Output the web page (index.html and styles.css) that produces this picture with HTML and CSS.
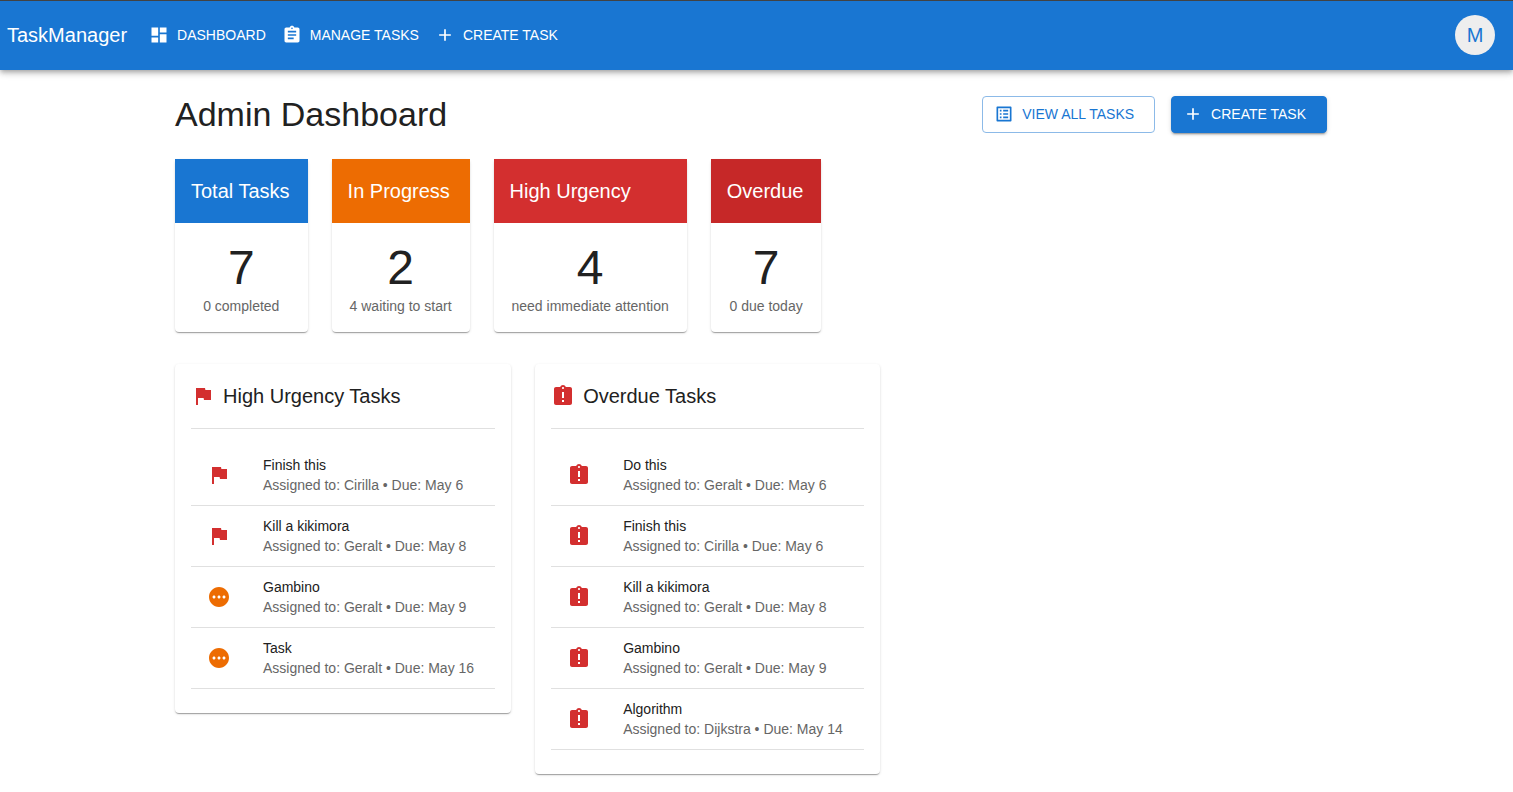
FILE: index.html
```html
<!DOCTYPE html>
<html lang="en">
<head>
<meta charset="utf-8">
<meta name="viewport" content="width=device-width, initial-scale=1">
<title>TaskManager</title>
<link rel="stylesheet" href="styles.css">
</head>
<body>
<svg class="sprite" aria-hidden="true">
  <symbol id="dashboard" viewBox="0 0 24 24"><path d="M3 13h8V3H3v10zm0 8h8v-6H3v6zm10 0h8V11h-8v10zm0-18v6h8V3h-8z"/></symbol>
  <symbol id="assignment" viewBox="0 0 24 24"><path d="M19 3h-4.18C14.4 1.84 13.3 1 12 1c-1.3 0-2.4.84-2.82 2H5c-1.1 0-2 .9-2 2v14c0 1.1.9 2 2 2h14c1.1 0 2-.9 2-2V5c0-1.1-.9-2-2-2zm-7 0c.55 0 1 .45 1 1s-.45 1-1 1-1-.45-1-1 .45-1 1-1zm2 14H7v-2h7v2zm3-4H7v-2h10v2zm0-4H7V7h10v2z"/></symbol>
  <symbol id="add" viewBox="0 0 24 24"><path d="M19 13h-6v6h-2v-6H5v-2h6V5h2v6h6v2z"/></symbol>
  <symbol id="list" viewBox="0 0 24 24"><path d="M19 5v14H5V5h14m1.1-2H3.9c-.5 0-.9.4-.9.9v16.2c0 .4.4.9.9.9h16.2c.4 0 .9-.5.9-.9V3.9c0-.5-.5-.9-.9-.9zM11 7h6v2h-6V7zm0 4h6v2h-6v-2zm0 4h6v2h-6zM7 7h2v2H7zm0 4h2v2H7zm0 4h2v2H7z"/></symbol>
  <symbol id="flag" viewBox="0 0 24 24"><path d="M14.4 6L14 4H5v17h2v-7h5.6l.4 2h7V6z"/></symbol>
  <symbol id="late" viewBox="0 0 24 24"><path d="M19 3h-4.18C14.4 1.84 13.3 1 12 1c-1.3 0-2.4.84-2.82 2H5c-1.1 0-2 .9-2 2v14c0 1.1.9 2 2 2h14c1.1 0 2-.9 2-2V5c0-1.1-.9-2-2-2zm-6 15h-2v-2h2v2zm0-4h-2V8h2v6zm-1-9c-.55 0-1-.45-1-1s.45-1 1-1 1 .45 1 1-.45 1-1 1z"/></symbol>
  <symbol id="pending" viewBox="0 0 24 24"><path d="M12 2C6.48 2 2 6.48 2 12s4.48 10 10 10 10-4.48 10-10S17.52 2 12 2zM7 13.5c-.83 0-1.5-.67-1.5-1.5s.67-1.5 1.5-1.5 1.5.67 1.5 1.5-.67 1.5-1.5 1.5zm5 0c-.83 0-1.5-.67-1.5-1.5s.67-1.5 1.5-1.5 1.5.67 1.5 1.5-.67 1.5-1.5 1.5zm5 0c-.83 0-1.5-.67-1.5-1.5s.67-1.5 1.5-1.5 1.5.67 1.5 1.5-.67 1.5-1.5 1.5z"/></symbol>
</svg>

<header class="appbar">
  <a class="brand" href="#">TaskManager</a>
  <nav class="nav">
    <a class="nav-link" href="#"><svg class="icon-small"><use href="#dashboard"/></svg>DASHBOARD</a>
    <a class="nav-link" href="#"><svg class="icon-small"><use href="#assignment"/></svg>MANAGE TASKS</a>
    <a class="nav-link" href="#"><svg class="icon-small"><use href="#add"/></svg>CREATE TASK</a>
  </nav>
  <button class="avatar" type="button">M</button>
</header>

<main class="page">
  <div class="container">
    <div class="page-head">
      <h1 class="page-title">Admin Dashboard</h1>
      <div class="actions">
        <button class="button button-outlined" type="button"><svg class="icon-small"><use href="#list"/></svg>VIEW ALL TASKS</button>
        <button class="button button-filled" type="button"><svg class="icon-small"><use href="#add"/></svg>CREATE TASK</button>
      </div>
    </div>

    <section class="stats">
      <article class="stat">
        <h2 class="stat-title blue">Total Tasks</h2>
        <div class="stat-body"><p class="stat-value">7</p><p class="stat-note">0 completed</p></div>
      </article>
      <article class="stat">
        <h2 class="stat-title orange">In Progress</h2>
        <div class="stat-body"><p class="stat-value">2</p><p class="stat-note">4 waiting to start</p></div>
      </article>
      <article class="stat">
        <h2 class="stat-title red">High Urgency</h2>
        <div class="stat-body"><p class="stat-value">4</p><p class="stat-note">need immediate attention</p></div>
      </article>
      <article class="stat">
        <h2 class="stat-title dark-red">Overdue</h2>
        <div class="stat-body"><p class="stat-value">7</p><p class="stat-note">0 due today</p></div>
      </article>
    </section>

    <section class="panels">
      <article class="panel">
        <h2 class="panel-title"><svg class="icon danger"><use href="#flag"/></svg>High Urgency Tasks</h2>
        <ul class="tasks">
          <li class="task"><svg class="icon danger"><use href="#flag"/></svg><div><p class="task-name">Finish this</p><p class="task-meta">Assigned to: Cirilla • Due: May 6</p></div></li>
          <li class="task"><svg class="icon danger"><use href="#flag"/></svg><div><p class="task-name">Kill a kikimora</p><p class="task-meta">Assigned to: Geralt • Due: May 8</p></div></li>
          <li class="task"><svg class="icon warning"><use href="#pending"/></svg><div><p class="task-name">Gambino</p><p class="task-meta">Assigned to: Geralt • Due: May 9</p></div></li>
          <li class="task"><svg class="icon warning"><use href="#pending"/></svg><div><p class="task-name">Task</p><p class="task-meta">Assigned to: Geralt • Due: May 16</p></div></li>
        </ul>
      </article>
      <article class="panel">
        <h2 class="panel-title"><svg class="icon danger"><use href="#late"/></svg>Overdue Tasks</h2>
        <ul class="tasks">
          <li class="task"><svg class="icon danger"><use href="#late"/></svg><div><p class="task-name">Do this</p><p class="task-meta">Assigned to: Geralt • Due: May 6</p></div></li>
          <li class="task"><svg class="icon danger"><use href="#late"/></svg><div><p class="task-name">Finish this</p><p class="task-meta">Assigned to: Cirilla • Due: May 6</p></div></li>
          <li class="task"><svg class="icon danger"><use href="#late"/></svg><div><p class="task-name">Kill a kikimora</p><p class="task-meta">Assigned to: Geralt • Due: May 8</p></div></li>
          <li class="task"><svg class="icon danger"><use href="#late"/></svg><div><p class="task-name">Gambino</p><p class="task-meta">Assigned to: Geralt • Due: May 9</p></div></li>
          <li class="task"><svg class="icon danger"><use href="#late"/></svg><div><p class="task-name">Algorithm</p><p class="task-meta">Assigned to: Dijkstra • Due: May 14</p></div></li>
        </ul>
      </article>
    </section>
  </div>
</main>
</body>
</html>
```

FILE: styles.css
```css
* {
  box-sizing: border-box;
}

body {
  margin: 0;
  background: #fff;
  color: #212121;
  font-family: "Liberation Sans", Arial, sans-serif;
  font-size: 14px;
  line-height: 20px;
}

h1, h2, p, ul {
  margin: 0;
  padding: 0;
  font-weight: 400;
}

.sprite {
  display: none;
}

.icon, .icon-small {
  flex: none;
  width: 24px;
  height: 24px;
  fill: currentColor;
}

.icon-small {
  width: 20px;
  height: 20px;
}

.appbar {
  display: flex;
  align-items: center;
  padding: 14px 18px 15px 7px;
  border-top: 1px solid #424242;
  background: #1976d2;
  color: #fff;
  box-shadow: 0 2px 4px -1px rgba(0, 0, 0, 0.2), 0 4px 5px rgba(0, 0, 0, 0.14), 0 1px 10px rgba(0, 0, 0, 0.12);
}

.brand, .nav-link {
  color: inherit;
  text-decoration: none;
}

.brand {
  font-size: 20px;
  line-height: 32px;
}

.nav {
  display: flex;
  flex: 1;
  gap: 16px;
  margin-left: 22px;
}

.nav-link {
  display: flex;
  align-items: center;
  gap: 8px;
}

.avatar {
  width: 40px;
  height: 40px;
  padding: 0;
  border: 0;
  border-radius: 50%;
  background: #eee;
  color: #1976d2;
  font: inherit;
  font-size: 20px;
}

.page {
  padding: 23px 11px 18px 0;
}

.container {
  max-width: 1200px;
  margin: 0 auto;
  padding: 0 24px;
}

.page-head {
  display: flex;
  align-items: center;
  justify-content: space-between;
  margin-bottom: 24px;
}

.page-title {
  font-size: 34px;
  line-height: 42px;
}

.actions {
  display: flex;
  gap: 16px;
}

.button {
  display: flex;
  align-items: center;
  gap: 8px;
  padding: 7px 20px 8px 11px;
  border: 1px solid #1976d2;
  border-radius: 4px;
  font: inherit;
}

.button-outlined {
  border-color: #8cbae8;
  background: #fff;
  color: #1976d2;
}

.button-filled {
  background: #1976d2;
  color: #fff;
  box-shadow: 0 3px 1px -2px rgba(0, 0, 0, 0.2), 0 2px 2px rgba(0, 0, 0, 0.14), 0 1px 5px rgba(0, 0, 0, 0.12);
}

.stats, .panels {
  display: flex;
  flex-wrap: wrap;
  align-items: flex-start;
  gap: 24px;
}

.stats {
  margin-bottom: 32px;
}

.stat, .panel {
  border-radius: 4px;
  background: #fff;
  box-shadow: 0 2px 1px -1px rgba(0, 0, 0, 0.2), 0 1px 1px rgba(0, 0, 0, 0.14), 0 1px 3px rgba(0, 0, 0, 0.12);
}

.stat-title {
  padding: 16px 18px 16px 16px;
  color: #fff;
  font-size: 20px;
  line-height: 32px;
}

.blue {
  background: #1976d2;
}

.orange {
  background: #ed6c02;
}

.red {
  background: #d32f2f;
}

.dark-red {
  background: #c62828;
}

.stat-body {
  padding: 16px 18px;
  text-align: center;
}

.stat-value {
  font-size: 48px;
  line-height: 57px;
}

.stat-note, .task-meta {
  color: #666;
}

.panel {
  padding: 16px 16px 24px;
}

.panel-title {
  display: flex;
  align-items: center;
  gap: 8px;
  padding-bottom: 16px;
  border-bottom: 1px solid #e0e0e0;
  font-size: 20px;
  line-height: 32px;
}

.tasks {
  margin-top: 16px;
  list-style: none;
}

.task {
  display: flex;
  align-items: center;
  gap: 32px;
  padding: 10px 21px 10px 16px;
  border-bottom: 1px solid #e0e0e0;
}

.danger {
  color: #d32f2f;
}

.warning {
  color: #ed6c02;
}
```
